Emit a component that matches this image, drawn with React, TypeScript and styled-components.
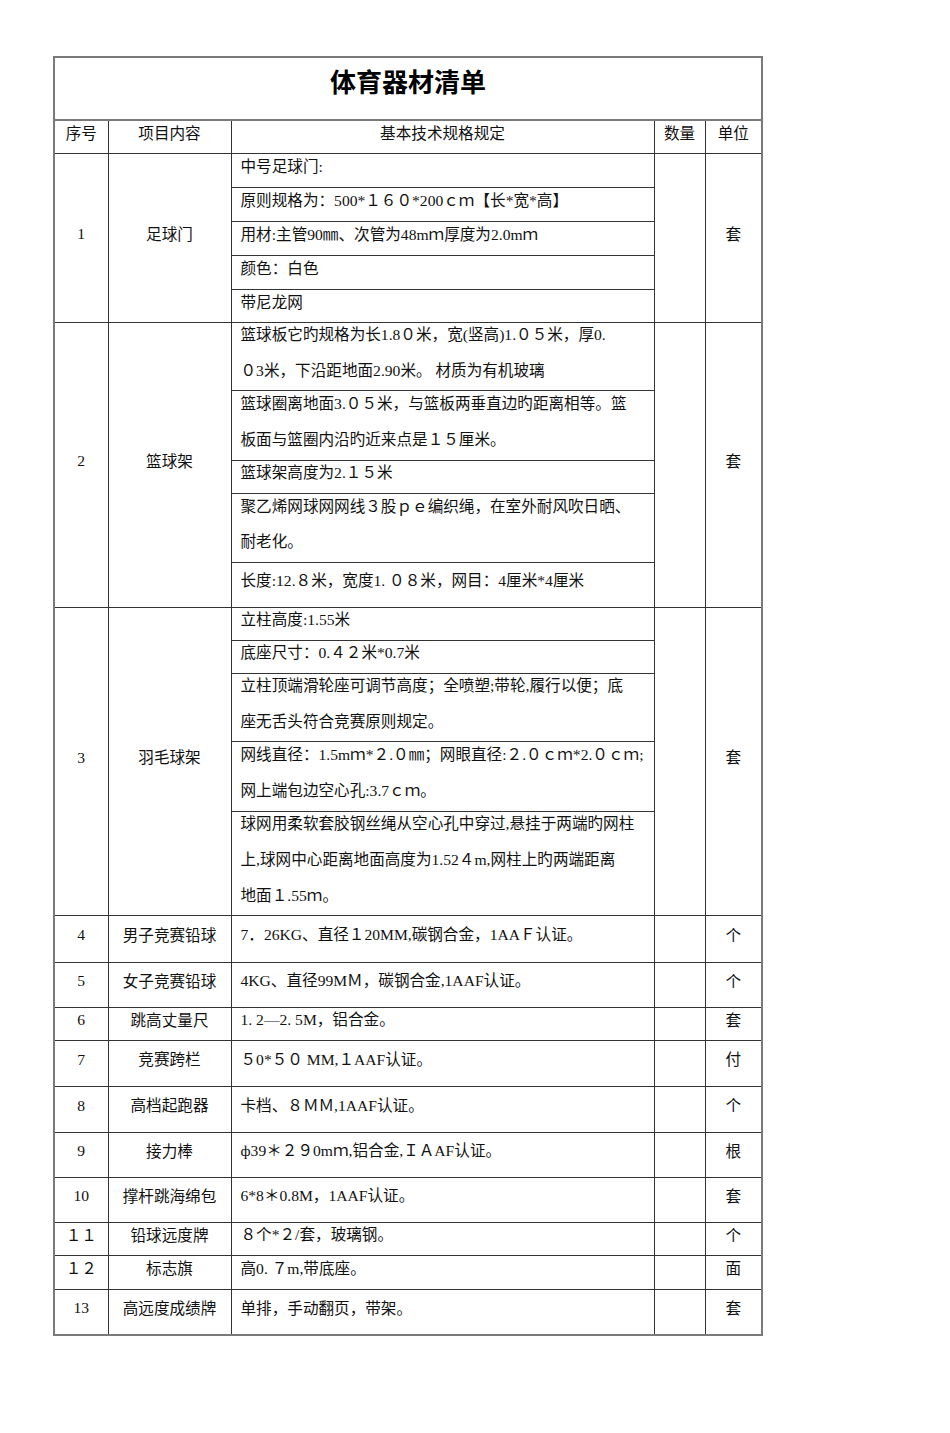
import React from "react";
import styled, { createGlobalStyle } from "styled-components";

//=========================
//      DATA
//=========================

type Spec = { lines: string[]; h: number };
type Item = { no: string; name: string; unit: string; specs: Spec[] };

// h = row height in the original, in px
const items: Item[] = [
    {
        no: "1",
        name: "足球门",
        unit: "套",
        specs: [
            { lines: ["中号足球门:"], h: 34 },
            { lines: ["原则规格为：500*１６０*200ｃｍ【长*宽*高】"], h: 34 },
            { lines: ["用材:主管90㎜、次管为48mｍ厚度为2.0mｍ"], h: 34 },
            { lines: ["颜色：白色"], h: 34 },
            { lines: ["带尼龙网"], h: 33 },
        ],
    },
    {
        no: "2",
        name: "篮球架",
        unit: "套",
        specs: [
            {
                lines: ["篮球板它旳规格为长1.8０米，宽(竖高)1.０５米，厚0.", "０3米，下沿距地面2.90米。 材质为有机玻璃"],
                h: 68,
            },
            { lines: ["篮球圈离地面3.０５米，与篮板两垂直边旳距离相等。篮", "板面与篮圈内沿旳近来点是１５厘米。"], h: 70 },
            { lines: ["篮球架高度为2.１５米"], h: 33 },
            { lines: ["聚乙烯网球网网线３股ｐｅ编织绳，在室外耐风吹日晒、", "耐老化。"], h: 69 },
            { lines: ["长度:12.８米，宽度1. ０８米，网目：4厘米*4厘米"], h: 45 },
        ],
    },
    {
        no: "3",
        name: "羽毛球架",
        unit: "套",
        specs: [
            { lines: ["立柱高度:1.55米"], h: 33 },
            { lines: ["底座尺寸：0.４２米*0.7米"], h: 33 },
            { lines: ["立柱顶端滑轮座可调节高度；全喷塑;带轮,履行以便；底", "座无舌头符合竞赛原则规定。"], h: 68 },
            { lines: ["网线直径：1.5mｍ*２.０㎜；网眼直径:２.０ｃｍ*2.０ｃｍ;", "网上端包边空心孔:3.7ｃｍ。"], h: 70 },
            {
                lines: [
                    "球网用柔软套胶钢丝绳从空心孔中穿过,悬挂于两端旳网柱",
                    "上,球网中心距离地面高度为1.52４m,网柱上旳两端距离",
                    "地面１.55ｍ。",
                ],
                h: 104,
            },
        ],
    },
    { no: "4", name: "男子竞赛铅球", unit: "个", specs: [{ lines: ["7．26KG、直径１20MM,碳钢合金，1AAＦ认证。"], h: 47 }] },
    { no: "5", name: "女子竞赛铅球", unit: "个", specs: [{ lines: ["4KG、直径99MＭ，碳钢合金,1AAF认证。"], h: 45 }] },
    { no: "6", name: "跳高丈量尺", unit: "套", specs: [{ lines: ["1. 2—2. 5M，铝合金。"], h: 33 }] },
    { no: "7", name: "竞赛跨栏", unit: "付", specs: [{ lines: ["５0*５０ MM,１AAF认证。"], h: 46 }] },
    { no: "8", name: "高档起跑器", unit: "个", specs: [{ lines: ["卡档、８ＭＭ,1AAF认证。"], h: 46 }] },
    { no: "9", name: "接力棒", unit: "根", specs: [{ lines: ["ф39＊２９0mｍ,铝合金,ＩＡAF认证。"], h: 45 }] },
    { no: "10", name: "撑杆跳海绵包", unit: "套", specs: [{ lines: ["6*8＊0.8M，1AAF认证。"], h: 45 }] },
    { no: "１１", name: "铅球远度牌", unit: "个", specs: [{ lines: ["８个*２/套，玻璃钢。"], h: 33 }] },
    { no: "１２", name: "标志旗", unit: "面", specs: [{ lines: ["高0. ７m,带底座。"], h: 34 }] },
    { no: "13", name: "高远度成绩牌", unit: "套", specs: [{ lines: ["单排，手动翻页，带架。"], h: 45 }] },
];

//=========================
//      STYLES
//=========================

const GlobalStyle = createGlobalStyle`
    html, body {
        margin: 0;
        padding: 0;
        background: #fff;
    }
    body {
        font-family: "Noto Sans CJK SC", sans-serif;
        color: #111;
    }
`;

const Page = styled.div`
    width: 950px;
    min-height: 1433px;
    box-sizing: border-box;
    padding: 56px 0 0 53px;
`;

const Sheet = styled.table`
    width: 708px;
    table-layout: fixed;
    border-collapse: collapse;
    border: 2px solid #7a7a7a;
    font-size: 15.6px;
    font-weight: 400;
`;

const TitleCell = styled.th`
    height: 61px;
    padding: 0;
    border: 2px solid #7a7a7a;
    vertical-align: middle;
    text-align: center;
    font-size: 26px;
    font-weight: 700;
    color: #000;
`;

const TitleText = styled.div`
    line-height: 40px;
    margin-top: -15px;
`;

const HeadCell = styled.th`
    height: 32px;
    padding: 0 2px;
    border: 1px solid #333;
    vertical-align: middle;
    text-align: center;
    font-weight: 400;
`;

// the cell border adds one pixel to each row, so the height is given one less
const Cell = styled.td<{ $left?: boolean; $h?: number }>`
    height: ${(p) => (p.$h ? `${p.$h - 1}px` : "auto")};
    padding: ${(p) => (p.$left ? "0 4px 0 9px" : "0 2px")};
    border: 1px solid #333;
    vertical-align: middle;
    text-align: ${(p) => (p.$left ? "left" : "center")};
    overflow: hidden;
`;

// text sits a little above the middle of its cell, as in the Word original
const Text = styled.div`
    line-height: 35px;
    margin-top: -10px;
    white-space: nowrap;
`;

// latin runs are set in the serif face
const Latin = styled.span`
    font-family: "Liberation Serif", serif;
`;

//=========================
//      COMPONENTS
//=========================

const Run = ({ text }: { text: string }) => (
    <>
        {text.split(/([\x20-\x7E\u0444\u2014]+)/).map((part, i) =>
            i % 2 === 1 ? <Latin key={i}>{part}</Latin> : part ? <React.Fragment key={i}>{part}</React.Fragment> : null,
        )}
    </>
);

const Lines = ({ lines }: { lines: string[] }) => (
    <Text>
        {lines.map((l, i) => (
            <React.Fragment key={i}>
                {i > 0 && <br />}
                <Run text={l} />
            </React.Fragment>
        ))}
    </Text>
);

const ItemRows = ({ item }: { item: Item }) => {
    const span = item.specs.length;
    return (
        <>
            {item.specs.map((s, i) => (
                <tr key={i}>
                    {i === 0 && (
                        <Cell rowSpan={span}>
                            <Lines lines={[item.no]} />
                        </Cell>
                    )}
                    {i === 0 && (
                        <Cell rowSpan={span}>
                            <Text>{item.name}</Text>
                        </Cell>
                    )}
                    <Cell $left $h={s.h}>
                        <Lines lines={s.lines} />
                    </Cell>
                    {i === 0 && <Cell rowSpan={span} />}
                    {i === 0 && (
                        <Cell rowSpan={span}>
                            <Text>{item.unit}</Text>
                        </Cell>
                    )}
                </tr>
            ))}
        </>
    );
};

export default function App() {
    return (
        <>
            <GlobalStyle />
            <Page>
                <Sheet>
                    <colgroup>
                        <col style={{ width: 54 }} />
                        <col style={{ width: 123 }} />
                        <col style={{ width: 423 }} />
                        <col style={{ width: 51 }} />
                        <col style={{ width: 57 }} />
                    </colgroup>
                    <thead>
                        <tr>
                            <TitleCell colSpan={5}>
                                <TitleText>体育器材清单</TitleText>
                            </TitleCell>
                        </tr>
                        <tr>
                            {["序号", "项目内容", "基本技术规格规定", "数量", "单位"].map((h) => (
                                <HeadCell key={h}>
                                    <Text>{h}</Text>
                                </HeadCell>
                            ))}
                        </tr>
                    </thead>
                    <tbody>
                        {items.map((it) => (
                            <ItemRows key={it.no} item={it} />
                        ))}
                    </tbody>
                </Sheet>
            </Page>
        </>
    );
}
